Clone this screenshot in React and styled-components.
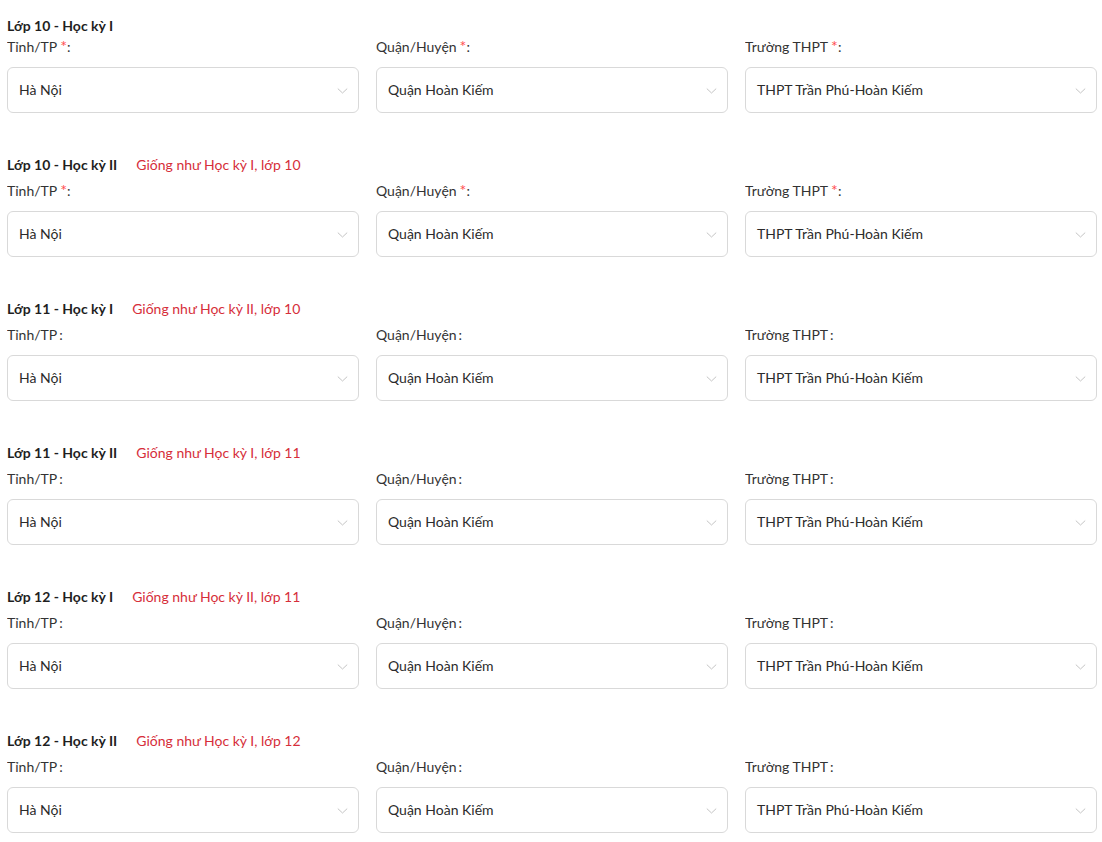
import React from "react"
import styled, { createGlobalStyle } from "styled-components"

const sections = [
  { title: "Lớp 10 - Học kỳ I", note: "", required: true },
  { title: "Lớp 10 - Học kỳ II", note: "Giống như Học kỳ I, lớp 10", required: true },
  { title: "Lớp 11 - Học kỳ I", note: "Giống như Học kỳ II, lớp 10", required: false },
  { title: "Lớp 11 - Học kỳ II", note: "Giống như Học kỳ I, lớp 11", required: false },
  { title: "Lớp 12 - Học kỳ I", note: "Giống như Học kỳ II, lớp 11", required: false },
  { title: "Lớp 12 - Học kỳ II", note: "Giống như Học kỳ I, lớp 12", required: false },
]

const fields = [
  { label: "Tỉnh/TP", value: "Hà Nội" },
  { label: "Quận/Huyện", value: "Quận Hoàn Kiếm" },
  { label: "Trường THPT", value: "THPT Trần Phú-Hoàn Kiếm" },
]

function Chevron() {
  return (
    <svg width="11" height="11" viewBox="0 0 11 11" fill="none">
      <path d="M0.8 3.6L5.5 8L10.2 3.6" stroke="#c4c4c4" strokeWidth="1" />
    </svg>
  )
}

function App() {
  return (
    <Page>
      <GlobalStyle />
      {sections.map((s, i) => (
        <Section key={i}>
          <TitleRow $hasNote={!!s.note}>
            <Title>{s.title}</Title>
            {s.note && <Note>{s.note}</Note>}
          </TitleRow>
          <Grid>
            {fields.map((f) => (
              <Field key={f.label}>
                <Label>
                  {f.label}
                  {s.required && <Star>*</Star>}
                  <Colon $tight={s.required}>:</Colon>
                </Label>
                <Select>
                  <span>{f.value}</span>
                  <Chevron />
                </Select>
              </Field>
            ))}
          </Grid>
        </Section>
      ))}
    </Page>
  )
}

const GlobalStyle = createGlobalStyle`
  body {
    margin: 0;
    background: #fff;
    font-family: Lato, "Noto Sans", sans-serif;
  }
`

const Page = styled.div`
  width: 1090px;
  padding: 14px 0 0 7px;
  display: flex;
  flex-direction: column;
  gap: 40px;
`

const Section = styled.div`
  display: flex;
  flex-direction: column;
`

const TitleRow = styled.div`
  display: flex;
  align-items: center;
  gap: 19px;
  height: 22px;
  margin-bottom: ${(p) => (p.$hasNote ? "5px" : "0")};
`

const Title = styled.div`
  font-size: 14px;
  font-weight: 700;
  color: #1f1f1f;
`

const Note = styled.div`
  font-size: 14px;
  color: #d62e3a;
`

const Grid = styled.div`
  display: grid;
  grid-template-columns: repeat(3, 352px);
  gap: 17px;
`

const Field = styled.div`
  display: flex;
  flex-direction: column;
  gap: 9px;
`

const Label = styled.div`
  height: 22px;
  overflow: hidden;
  font-size: 14px;
  line-height: 22px;
  color: #333;
  white-space: nowrap;
`

const Star = styled.span`
  color: #ff4d4f;
  font-size: 16px;
  line-height: 14px;
  margin-left: 3px;
`

const Colon = styled.span`
  margin-left: ${(p) => (p.$tight ? "0" : "2px")};
`

const Select = styled.div`
  box-sizing: border-box;
  height: 46px;
  border: 1px solid #d9d9d9;
  border-radius: 6px;
  padding: 0 10px 2px 11px;
  display: flex;
  align-items: center;
  justify-content: space-between;
  font-size: 14px;
  color: #2b2b2b;
  svg {
    margin-top: 2px;
  }
`

export default App
